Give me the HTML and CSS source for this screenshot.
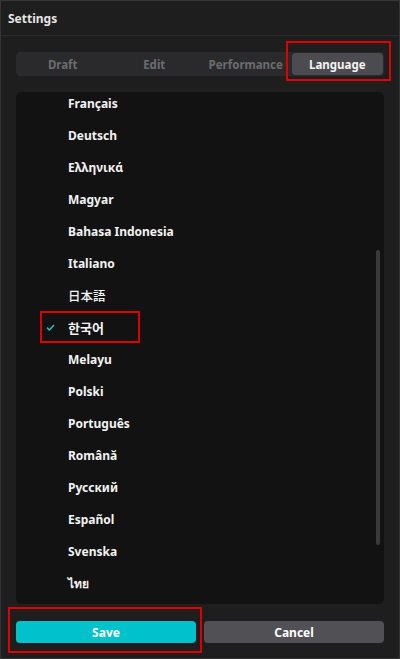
FILE: index.html
```html
<!DOCTYPE html>
<html>
<head>
<meta charset="utf-8">
<link rel="stylesheet" href="styles.css">
</head>
<body>
<div class="window">
  <div class="header">Settings</div>
  <div class="content">
    <div class="tabs">
      <div class="tab">Draft</div>
      <div class="tab">Edit</div>
      <div class="tab">Performance</div>
      <div class="tab active">Language<span class="mark mark-tab"></span></div>
    </div>
    <div class="panel">
      <ul class="list">
        <li class="item"><span class="check"></span><span class="label">Français</span></li>
        <li class="item"><span class="check"></span><span class="label">Deutsch</span></li>
        <li class="item"><span class="check"></span><span class="label">Ελληνικά</span></li>
        <li class="item"><span class="check"></span><span class="label">Magyar</span></li>
        <li class="item"><span class="check"></span><span class="label">Bahasa Indonesia</span></li>
        <li class="item"><span class="check"></span><span class="label">Italiano</span></li>
        <li class="item"><span class="check"></span><span class="label cjk ja">日本語</span></li>
        <li class="item selected"><span class="check"><svg width="9" height="7" viewBox="0 0 9 7"><path d="M1 3.6 L3.4 6 L8 1" fill="none" stroke="#17c1cc" stroke-width="1.5"/></svg></span><span class="label cjk">한국어</span><span class="mark mark-item"></span></li>
        <li class="item"><span class="check"></span><span class="label">Melayu</span></li>
        <li class="item"><span class="check"></span><span class="label">Polski</span></li>
        <li class="item"><span class="check"></span><span class="label">Português</span></li>
        <li class="item"><span class="check"></span><span class="label">Română</span></li>
        <li class="item"><span class="check"></span><span class="label">Русский</span></li>
        <li class="item"><span class="check"></span><span class="label">Español</span></li>
        <li class="item"><span class="check"></span><span class="label">Svenska</span></li>
        <li class="item"><span class="check"></span><span class="label">ไทย</span></li>
      </ul>
      <div class="scrollbar"></div>
    </div>
    <div class="actions">
      <button class="btn save">Save<span class="mark mark-save"></span></button>
      <button class="btn cancel">Cancel</button>
    </div>
  </div>
</div>
</body>
</html>
```
FILE: styles.css
```css
* { box-sizing: border-box; }
html, body { margin: 0; padding: 0; }
body {
  background: #1e1e1e;
  font-family: "Noto Sans", "Noto Sans CJK KR", "DejaVu Sans", sans-serif;
  font-weight: 700;
  font-size: 12px;
}
.window {
  width: 400px;
  height: 659px;
  border: 1px solid #353535;
  background: #1e1e1e;
  display: flex;
  flex-direction: column;
}
.header {
  height: 35px;
  border-bottom: 1px solid #2c2c2c;
  padding-left: 7px;
  display: flex;
  align-items: center;
  color: #e4e4e4;
  flex: none;
}
.content {
  padding: 16px 15px 15px 15px;
  display: flex;
  flex-direction: column;
}
.tabs {
  height: 24px;
  background: #2a2a2d;
  border-radius: 4px;
  display: grid;
  grid-template-columns: repeat(4, 1fr);
  padding: 1px;
}
.tab {
  position: relative;
  display: flex;
  align-items: center;
  justify-content: center;
  color: #6c6c6e;
  border-radius: 4px;
  font-size: 11.5px;
}
.tab.active {
  background: #4b4b50;
  color: #f4f4f4;
}
.mark {
  position: absolute;
  border: 2px solid #e00000;
  pointer-events: none;
}
.mark-tab { left: -6px; right: -8px; top: -12px; bottom: -6px; }
.panel {
  position: relative;
  margin-top: 16px;
  height: 512px;
  background: #121212;
  border-radius: 6px;
  overflow: hidden;
}
.list {
  list-style: none;
  margin: -5px 0 0 0;
  padding: 0;
}
.item {
  position: relative;
  height: 32px;
  display: flex;
  align-items: center;
  padding-left: 30px;
  color: #f2f2f2;
}
.check {
  width: 22px;
  display: flex;
  align-items: center;
}
.label.cjk {
  font-family: "Noto Sans CJK KR", "Noto Sans CJK JP", sans-serif;
  font-weight: 700;
  font-size: 13px;
}
.label.ja {
  font-family: "Noto Sans CJK JP", sans-serif;
  font-weight: 500;
  font-size: 12.5px;
}
.mark-item { left: 24px; width: 100px; top: 0px; height: 32px; }
.scrollbar {
  position: absolute;
  left: 360px;
  top: 158px;
  width: 4px;
  height: 295px;
  background: #3a3a3a;
  border-radius: 2px;
}
.actions {
  margin-top: 17px;
  display: grid;
  grid-template-columns: 1fr 1fr;
  gap: 8px;
}
.btn {
  position: relative;
  height: 22px;
  border: none;
  border-radius: 4px;
  font: inherit;
  color: #ffffff;
  padding: 0;
}
.save { background: #00c1cc; }
.cancel { background: #505055; }
.mark-save { left: -8px; right: -6px; top: -14px; bottom: -10px; }
```
